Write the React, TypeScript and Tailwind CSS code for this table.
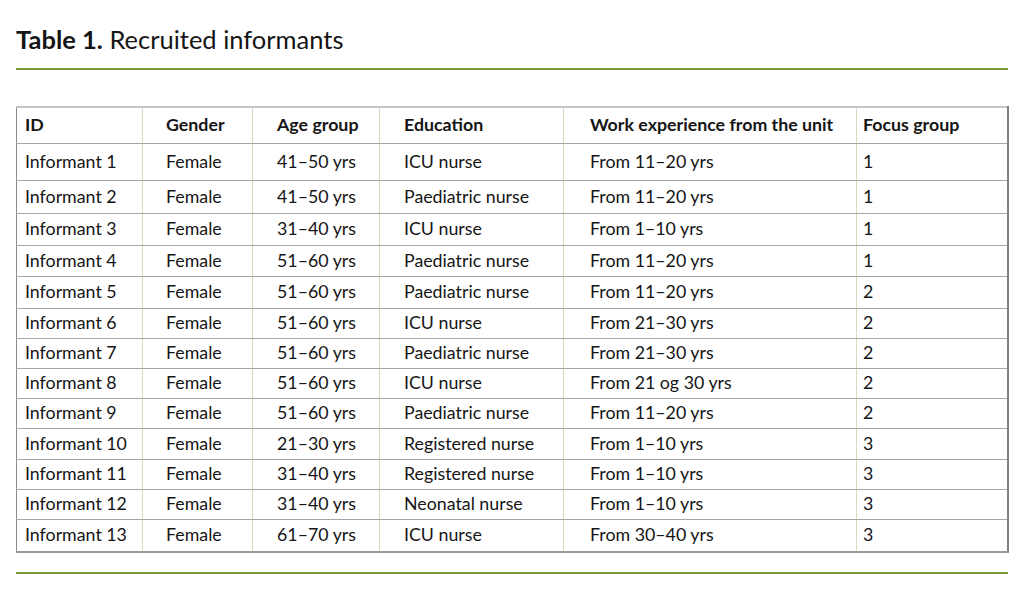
const columns = [
  { label: "ID", width: "w-[126px]", pad: "pl-[8px]" },
  { label: "Gender", width: "w-[110px]", pad: "pl-[23px]" },
  { label: "Age group", width: "w-[127px]", pad: "pl-[24px]" },
  { label: "Education", width: "w-[184px]", pad: "pl-[24px]" },
  { label: "Work experience from the unit", width: "w-[293px]", pad: "pl-[26px]" },
  { label: "Focus group", width: "w-[151px]", pad: "pl-[6px]" },
];

const rows: { h: string; cells: string[] }[] = [
  { h: "h-[37px]", cells: ["Informant 1", "Female", "41–50 yrs", "ICU nurse", "From 11–20 yrs", "1"] },
  { h: "h-[33px]", cells: ["Informant 2", "Female", "41–50 yrs", "Paediatric nurse", "From 11–20 yrs", "1"] },
  { h: "h-[32px]", cells: ["Informant 3", "Female", "31–40 yrs", "ICU nurse", "From 1–10 yrs", "1"] },
  { h: "h-[31px]", cells: ["Informant 4", "Female", "51–60 yrs", "Paediatric nurse", "From 11–20 yrs", "1"] },
  { h: "h-[32px]", cells: ["Informant 5", "Female", "51–60 yrs", "Paediatric nurse", "From 11–20 yrs", "2"] },
  { h: "h-[30px]", cells: ["Informant 6", "Female", "51–60 yrs", "ICU nurse", "From 21–30 yrs", "2"] },
  { h: "h-[30px]", cells: ["Informant 7", "Female", "51–60 yrs", "Paediatric nurse", "From 21–30 yrs", "2"] },
  { h: "h-[30px]", cells: ["Informant 8", "Female", "51–60 yrs", "ICU nurse", "From 21 og 30 yrs", "2"] },
  { h: "h-[30px]", cells: ["Informant 9", "Female", "51–60 yrs", "Paediatric nurse", "From 11–20 yrs", "2"] },
  { h: "h-[31px]", cells: ["Informant 10", "Female", "21–30 yrs", "Registered nurse", "From 1–10 yrs", "3"] },
  { h: "h-[30px]", cells: ["Informant 11", "Female", "31–40 yrs", "Registered nurse", "From 1–10 yrs", "3"] },
  { h: "h-[30px]", cells: ["Informant 12", "Female", "31–40 yrs", "Neonatal nurse", "From 1–10 yrs", "3"] },
  { h: "h-[33px]", cells: ["Informant 13", "Female", "61–70 yrs", "ICU nurse", "From 30–40 yrs", "3"] },
];

export default function App() {
  return (
    <div className="w-[1024px] h-[592px] bg-white px-4 font-['Lato',sans-serif] text-[#151515]">
      <h1 className="pt-[25px] h-[68px] text-[25.5px] leading-[28px]">
        <span className="font-bold">Table 1.</span> Recruited informants
      </h1>
      <div className="h-[2px] bg-[#7b9a3e]" />

      <table className="mt-[36px] w-[991px] table-fixed border-collapse text-[17.8px]">
        <thead>
          <tr className="h-[36px]">
            {columns.map((c, i) => (
              <th
                key={c.label}
                className={`${c.width} ${c.pad} pb-[1px] text-left font-bold border-t-2 border-t-[#c4c4c4] border-b border-b-[#a6a6a6] ${
                  i === 0 ? "border-l border-l-[#8a8a8a]" : ""
                } ${i === columns.length - 1 ? "border-r-2 border-r-[#808080]" : "border-r border-r-[#d6dbc1]"}`}
              >
                {c.label}
              </th>
            ))}
          </tr>
        </thead>
        <tbody>
          {rows.map((r, ri) => (
            <tr key={ri} className={r.h}>
              {r.cells.map((cell, i) => (
                <td
                  key={i}
                  className={`${columns[i].pad} pb-[1px] ${
                    ri === rows.length - 1 ? "border-b-2 border-b-[#9a9a9a]" : "border-b border-b-[#a6a6a6]"
                  } ${i === 0 ? "border-l border-l-[#8a8a8a]" : ""} ${
                    i === columns.length - 1 ? "border-r-2 border-r-[#808080]" : "border-r border-r-[#d6dbc1]"
                  }`}
                >
                  {cell}
                </td>
              ))}
            </tr>
          ))}
        </tbody>
      </table>

      <div className="mt-[19px] h-[2px] bg-[#7b9a3e]" />
    </div>
  );
}
